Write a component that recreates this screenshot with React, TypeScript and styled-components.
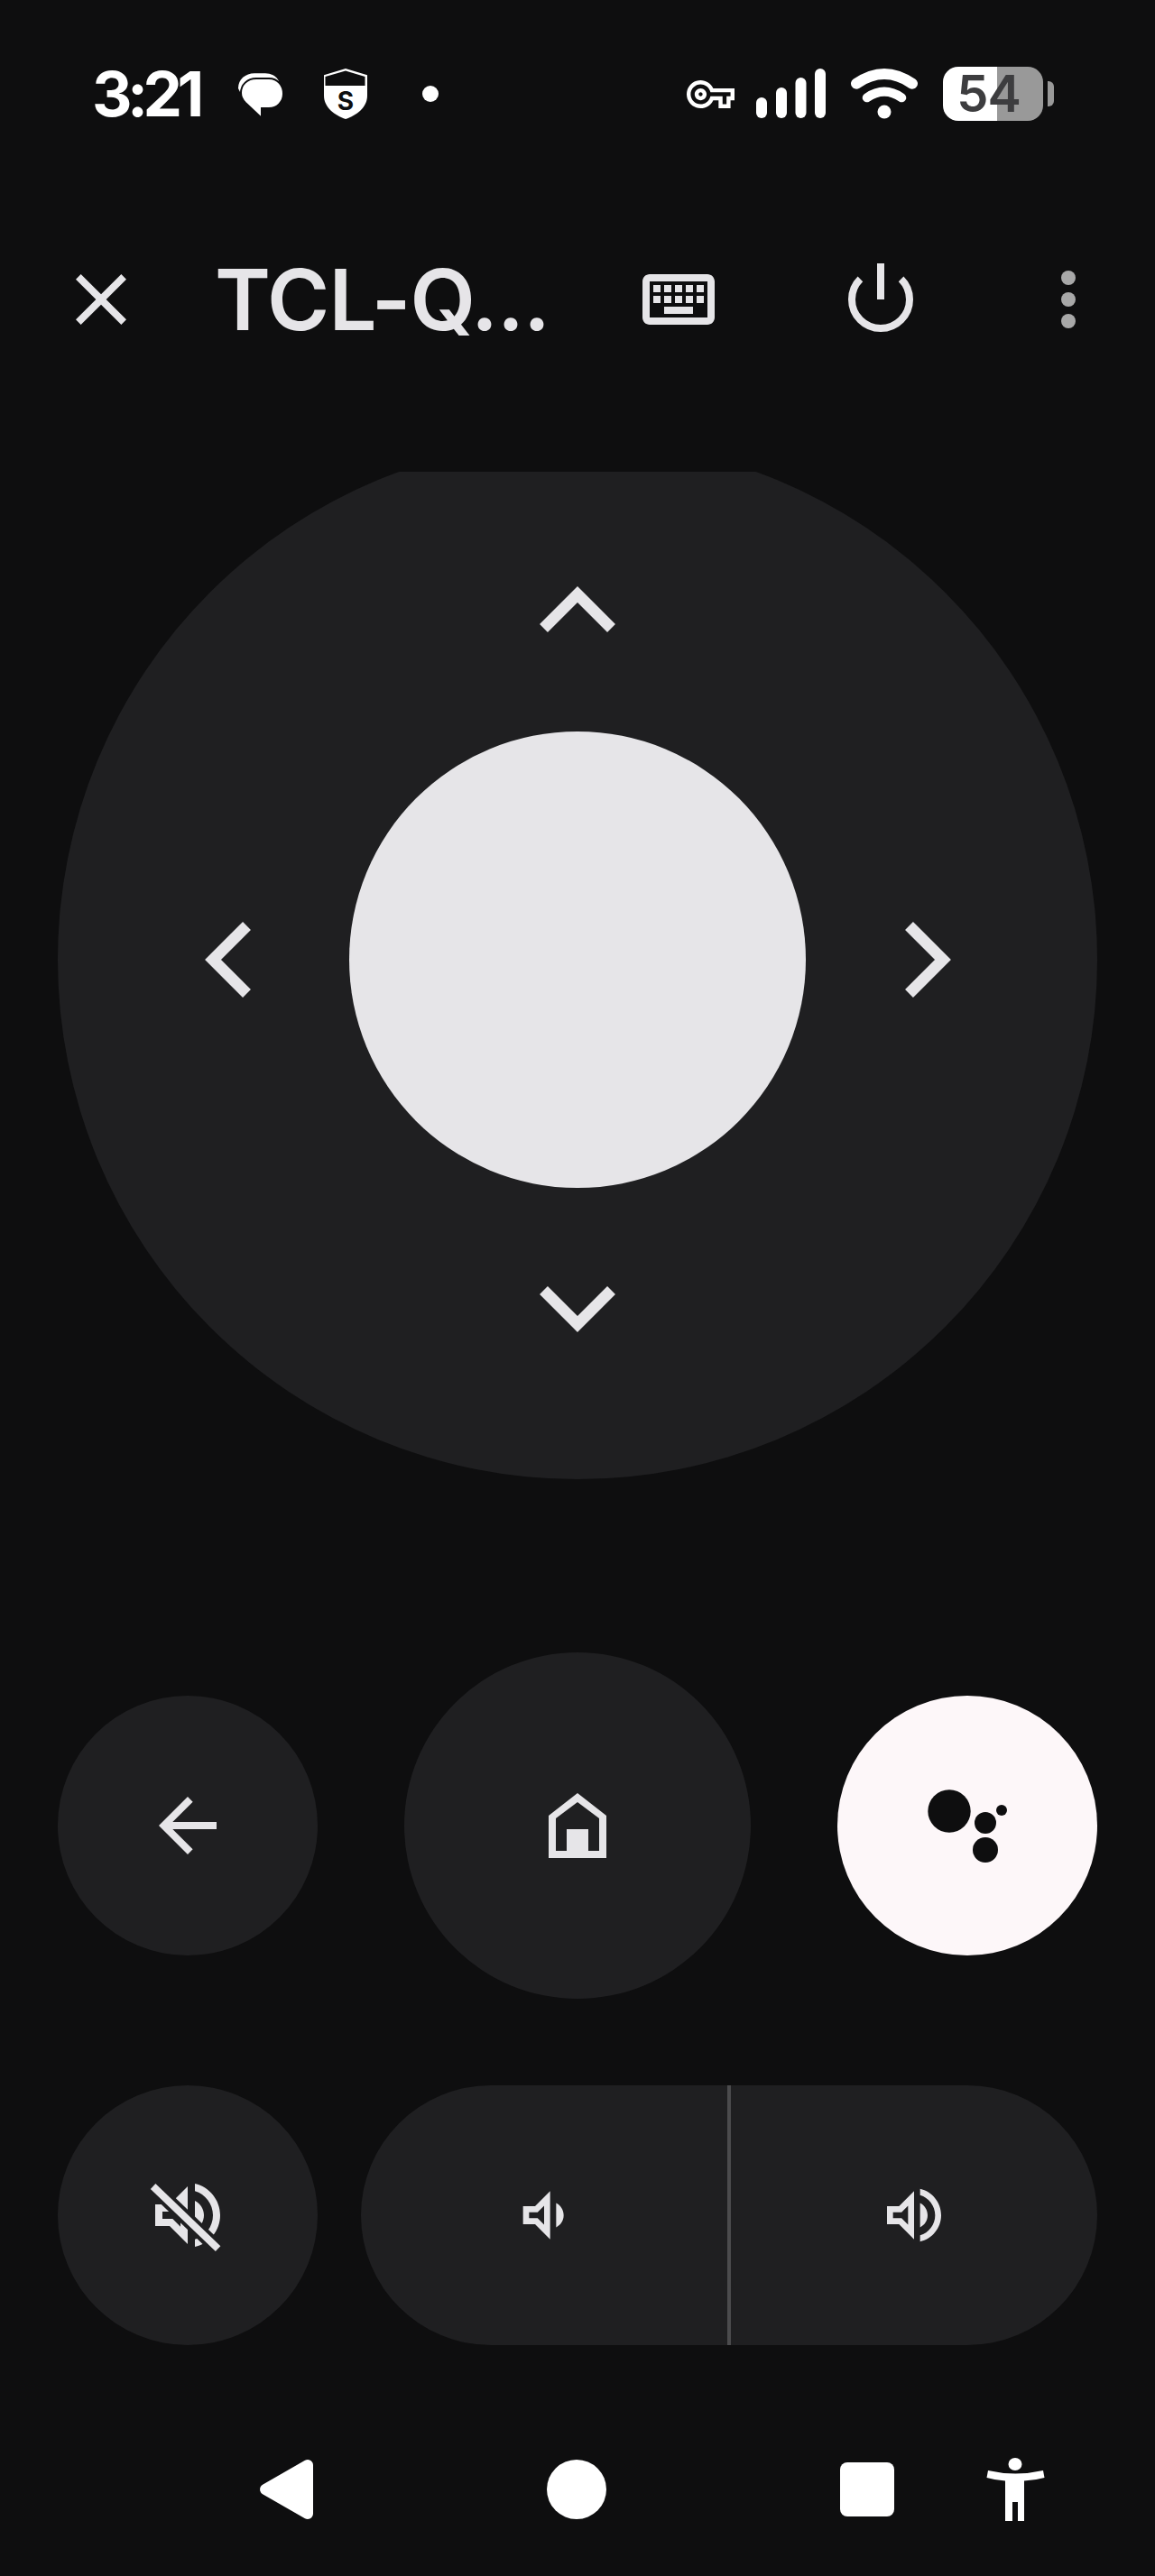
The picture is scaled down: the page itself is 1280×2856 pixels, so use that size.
import React from 'react';
import styled, { createGlobalStyle } from 'styled-components';

const GlobalStyle = createGlobalStyle`
  html, body {
    margin: 0;
    padding: 0;
    background: #0e0e0f;
  }
`;

const Page = styled.div`
  width: 1280px;
  height: 2856px;
  overflow: hidden;
  box-sizing: border-box;
  display: flex;
  flex-direction: column;
  background: #0e0e0f;
  color: #e6e5e8;
  font-family: 'Inter', 'Liberation Sans', sans-serif;
`;

const StatusBar = styled.div`
  height: 208px;
  flex-shrink: 0;
  box-sizing: border-box;
  padding: 0 112px 0 102px;
  display: flex;
  align-items: center;
  justify-content: space-between;
  color: #fff;
`;

const StatusGroup = styled.div<{ $gap: number }>`
  display: flex;
  align-items: center;
  gap: ${({ $gap }) => $gap}px;
`;

const Clock = styled.div`
  width: 123px;
  font-size: 69px;
  line-height: 1;
  font-weight: 700;
  letter-spacing: -5.5px;
  white-space: nowrap;
`;

const BatteryWrap = styled.div`
  display: flex;
  align-items: center;
  gap: 5px;
`;

const BatteryBody = styled.div`
  width: 111px;
  height: 60px;
  border-radius: 17px;
  background: linear-gradient(90deg, #fff 60px, #999 60px);
  color: #3d3d3f;
  font-size: 56px;
  font-weight: 600;
  line-height: 60px;
  text-align: center;
  letter-spacing: -1px;
  padding-right: 10px;
  box-sizing: border-box;
`;

const BatteryNub = styled.div`
  width: 7px;
  height: 28px;
  border-radius: 0 6px 6px 0;
  background: #999;
`;

const Toolbar = styled.div`
  height: 248px;
  flex-shrink: 0;
  box-sizing: border-box;
  padding-left: 64px;
  display: flex;
  align-items: center;
`;

const Title = styled.div`
  margin-left: 78px;
  width: 466px;
  font-size: 94px;
  font-weight: 600;
  letter-spacing: -1px;
  line-height: 1;
  white-space: nowrap;
`;

const ToolIcon = styled.div<{ $space?: number; $color?: string }>`
  width: 96px;
  height: 96px;
  flex-shrink: 0;
  margin-left: ${({ $space }) => $space ?? 0}px;
  color: ${({ $color }) => $color ?? '#e6e5e8'};

  > svg {
    display: block;
  }
`;

const DpadClip = styled.div`
  margin: 67px 0 0 64px;
  width: 1152px;
  height: 1117px;
  flex-shrink: 0;
  overflow: hidden;
`;

const Dpad = styled.div`
  position: relative;
  margin-top: -35px;
  width: 1152px;
  height: 1152px;
  border-radius: 50%;
  background: #1f1f21;
  display: flex;
  align-items: center;
  justify-content: center;
`;

const DpadCenter = styled.div`
  width: 506px;
  height: 506px;
  border-radius: 50%;
  background: #e6e5e8;
`;

const DpadArrow = styled.div<{ $left: number; $top: number; $turn: number }>`
  position: absolute;
  left: ${({ $left }) => $left}px;
  top: ${({ $top }) => $top}px;
  width: 96px;
  height: 96px;
  transform: rotate(${({ $turn }) => $turn}deg);
  color: #e6e5e8;
`;

const ButtonRow = styled.div<{ $top: number; $gap: number }>`
  margin: ${({ $top }) => $top}px 64px 0;
  display: flex;
  align-items: center;
  gap: ${({ $gap }) => $gap}px;
  flex-shrink: 0;
`;

const RoundButton = styled.div<{ $size: number; $light?: boolean }>`
  width: ${({ $size }) => $size}px;
  height: ${({ $size }) => $size}px;
  flex-shrink: 0;
  border-radius: 50%;
  background: ${({ $light }) => ($light ? '#fdf7f9' : '#1f1f21')};
  color: ${({ $light }) => ($light ? '#0e0e0f' : '#e6e5e8')};
  display: flex;
  align-items: center;
  justify-content: center;
`;

const VolumePill = styled.div`
  flex: 1;
  height: 288px;
  border-radius: 144px;
  background: #1f1f21;
  display: flex;
  align-items: center;
  overflow: hidden;
  color: #e6e5e8;
`;

const VolumeSide = styled.div`
  flex: 1;
  height: 100%;
  display: flex;
  align-items: center;
  justify-content: center;
`;

const VolumeDivider = styled.div`
  width: 4px;
  height: 100%;
  background: #4b4b4d;
`;

const NavBar = styled.div`
  margin-top: 112px;
  padding-left: 269px;
  display: flex;
  flex-shrink: 0;
  color: #fff;
`;

const NavSlot = styled.div<{ $space?: number }>`
  width: 96px;
  height: 96px;
  margin-left: ${({ $space }) => $space ?? 0}px;
  display: flex;
  align-items: center;
  justify-content: center;
`;

const NavCircle = styled.div`
  width: 66px;
  height: 66px;
  border-radius: 50%;
  background: #fff;
`;

const NavSquare = styled.div`
  width: 60px;
  height: 60px;
  border-radius: 8px;
  background: #fff;
`;

const VOLUME_UP =
  'M3 9v6h4l5 5V4L7 9H3zm7-.17v6.34L7.83 13H5v-2h2.83L10 8.83zM16.5 12c0-1.77-1.02-3.29-2.5-4.03v8.05c1.48-.73 2.5-2.25 2.5-4.02zM14 3.23v2.06c2.89.86 5 3.54 5 6.71s-2.11 5.85-5 6.71v2.06c4.01-.91 7-4.49 7-8.77 0-4.28-2.99-7.86-7-8.77z';
const VOLUME_DOWN =
  'M18.5 12c0-1.77-1.02-3.29-2.5-4.03v8.05c1.48-.73 2.5-2.25 2.5-4.02zM5 9v6h4l5 5V4L9 9H5zm7-.17v6.34L9.83 13H7v-2h2.83L12 8.83z';

const Chevron = () => (
  <svg width="96" height="96" viewBox="0 0 96 96">
    <path d="M10.5 69.5 48 32l37.5 37.5" fill="none" stroke="currentColor" strokeWidth="12.6" />
  </svg>
);

const Icon24 = ({ d, size = 96 }: { d: string; size?: number }) => (
  <svg width={size} height={size} viewBox="0 0 24 24" fill="currentColor">
    <path d={d} />
  </svg>
);

const App: React.FC = () => {
  return (
    <>
      <GlobalStyle />
      <Page>
        <StatusBar>
          <StatusGroup $gap={37}>
            <Clock>3:21</Clock>
            <svg width="56" height="56" viewBox="0 0 56 56">
              <path d="M2 22C2 12 10 5.3 20 5.3H32C38 5.3 44 8 47 14L4 26Z" fill="#fff" />
              <path
                d="M22 11H36C46 11 52 19 52 28C52 37 45 44 36 44H28V55L10 38C7 35 5 32 5 27C5 18 12 11 22 11Z"
                fill="#fff"
                stroke="#0e0e0f"
                strokeWidth="2"
              />
            </svg>
            <svg width="56" height="56" viewBox="0 0 56 56">
              <path
                d="M28 0L52 7.3V30C52 43 40 52 28 56C16 52 4 43 4 30V7.3Z"
                fill="#fff"
              />
              <path d="M5.5 9L28 2.4 49.5 9V19H5.5Z" fill="#0e0e0f" />
              <text
                x="28"
                y="45.5"
                textAnchor="middle"
                fontSize="28"
                fontWeight="700"
                fontFamily="Inter, sans-serif"
                fill="#0e0e0f"
              >
                S
              </text>
            </svg>
            <svg width="56" height="56" viewBox="0 0 56 56">
              <circle cx="29" cy="28" r="9" fill="#fff" />
            </svg>
          </StatusGroup>
          <StatusGroup $gap={24}>
            <Icon24
              size={53}
              d="M22 19h-6v-4h-2.68c-1.14 2.42-3.6 4-6.32 4-3.86 0-7-3.14-7-7s3.14-7 7-7c2.72 0 5.17 1.58 6.32 4H24v6h-2v4zm-4-2h2v-4h2v-2H11.94l-.23-.67C11.01 8.34 9.11 7 7 7c-2.76 0-5 2.24-5 5s2.24 5 5 5c2.11 0 4.01-1.34 4.71-3.33l.23-.67H18v4zM7 15c-1.65 0-3-1.35-3-3s1.35-3 3-3 3 1.35 3 3-1.35 3-3 3zm0-4c-.55 0-1 .45-1 1s.45 1 1 1 1-.45 1-1-.45-1-1-1z"
            />
            <svg width="77" height="64" viewBox="0 0 77 64" fill="#fff">
              <rect x="0" y="36" width="12" height="23" rx="6" />
              <rect x="22" y="25" width="12" height="34" rx="6" />
              <rect x="43.500" y="14" width="12" height="45" rx="6" />
              <rect x="65" y="4" width="12" height="55" rx="6" />
            </svg>
            <svg width="82" height="64" viewBox="0 0 82 64">
              <path d="M10 20.700Q41 -0.700 72 20.700" fill="none" stroke="#fff" strokeWidth="12" strokeLinecap="round" />
              <path d="M21.700 36.300Q41 23.100 60.300 36.300" fill="none" stroke="#fff" strokeWidth="10" strokeLinecap="round" />
              <circle cx="41" cy="52" r="7.500" fill="#fff" />
            </svg>
            <BatteryWrap>
              <BatteryBody>54</BatteryBody>
              <BatteryNub />
            </BatteryWrap>
          </StatusGroup>
        </StatusBar>

        <Toolbar>
          <ToolIcon>
            <Icon24 d="M19 6.410L17.590 5 12 10.590 6.410 5 5 6.410 10.590 12 5 17.590 6.410 19 12 13.410 17.590 19 19 17.590 13.410 12z" />
          </ToolIcon>
          <Title>TCL-Q...</Title>
          <ToolIcon>
            <Icon24 d="M20 5H4c-1.100 0-1.990.900-1.990 2L2 17c0 1.100.900 2 2 2h16c1.100 0 2-.900 2-2V7c0-1.100-.900-2-2-2zm0 12H4V7h16v10zM11 8h2v2h-2zm0 3h2v2h-2zM8 8h2v2H8zm0 3h2v2H8zM5 11h2v2H5zm0-3h2v2H5zm3 6h8v2H8zm6-3h2v2h-2zm0-3h2v2h-2zm3 3h2v2h-2zm0-3h2v2h-2z" />
          </ToolIcon>
          <ToolIcon $space={128}>
            <svg width="96" height="96" viewBox="0 0 96 96" fill="none" stroke="currentColor" strokeWidth="8">
              <path d="M25.400 25.400A32 32 0 1 0 70.600 25.400" />
              <path d="M48 8V48" />
            </svg>
          </ToolIcon>
          <ToolIcon $space={112} $color="#a8a8a8">
            <svg width="96" height="96" viewBox="0 0 96 96" fill="currentColor">
              <circle cx="48" cy="24" r="8" />
              <circle cx="48" cy="48" r="8" />
              <circle cx="48" cy="72" r="8" />
            </svg>
          </ToolIcon>
        </Toolbar>

        <DpadClip>
          <Dpad>
            <DpadCenter />
            <DpadArrow $left={528} $top={139} $turn={0}>
              <Chevron />
            </DpadArrow>
            <DpadArrow $left={916.500} $top={528} $turn={90}>
              <Chevron />
            </DpadArrow>
            <DpadArrow $left={528} $top={915.500} $turn={180}>
              <Chevron />
            </DpadArrow>
            <DpadArrow $left={139.500} $top={528} $turn={270}>
              <Chevron />
            </DpadArrow>
          </Dpad>
        </DpadClip>

        <ButtonRow $top={192} $gap={96}>
          <RoundButton $size={288}>
            <Icon24 d="M20 11H7.830l5.590-5.590L12 4l-8 8 8 8 1.410-1.410L7.830 13H20v-2z" />
          </RoundButton>
          <RoundButton $size={384}>
            <svg width="96" height="96" viewBox="0 0 96 96" fill="currentColor" fillRule="evenodd">
              <path d="M48 12L80 37V84H16V37ZM48 22L24 40V76H36V52H60V76H72V40Z" />
            </svg>
          </RoundButton>
          <RoundButton $size={288} $light>
            <svg width="96" height="96" viewBox="0 0 96 96" fill="currentColor">
              <circle cx="28" cy="32" r="23.700" />
              <circle cx="68" cy="45" r="12" />
              <circle cx="68" cy="75" r="14" />
              <circle cx="86" cy="31" r="6" />
            </svg>
          </RoundButton>
        </ButtonRow>

        <ButtonRow $top={96} $gap={48}>
          <RoundButton $size={288}>
            <svg width="96" height="96" viewBox="0 0 24 24" fill="currentColor">
              <mask id="muteGap">
                <rect width="24" height="24" fill="#fff" />
                <path d="M2.400 4L20.400 21.300" stroke="#000" strokeWidth="4" />
              </mask>
              <path d={VOLUME_UP} mask="url(#muteGap)" />
              <path d="M2.400 4L20.400 21.300" stroke="currentColor" strokeWidth="2" />
            </svg>
          </RoundButton>
          <VolumePill>
            <VolumeSide>
              <Icon24 size={80} d={VOLUME_DOWN} />
            </VolumeSide>
            <VolumeDivider />
            <VolumeSide>
              <Icon24 size={80} d={VOLUME_UP} />
            </VolumeSide>
          </VolumePill>
        </ButtonRow>

        <NavBar>
          <NavSlot>
            <svg width="96" height="96" viewBox="0 0 96 96">
              <path d="M72 21V75L25 48Z" fill="#fff" stroke="#fff" strokeWidth="12" strokeLinejoin="round" />
            </svg>
          </NavSlot>
          <NavSlot $space={226}>
            <NavCircle />
          </NavSlot>
          <NavSlot $space={226}>
            <NavSquare />
          </NavSlot>
          <NavSlot $space={68}>
            <svg width="96" height="96" viewBox="0 0 96 96" fill="#fff">
              <ellipse cx="48" cy="20" rx="7.500" ry="7" />
              <path d="M18 27Q48 34 79 27L80.500 35Q70 38 58 38.500V83H51V62H45V83H37V38.500Q27 38 16.500 35Z" />
            </svg>
          </NavSlot>
        </NavBar>
      </Page>
    </>
  );
};

export default App;
